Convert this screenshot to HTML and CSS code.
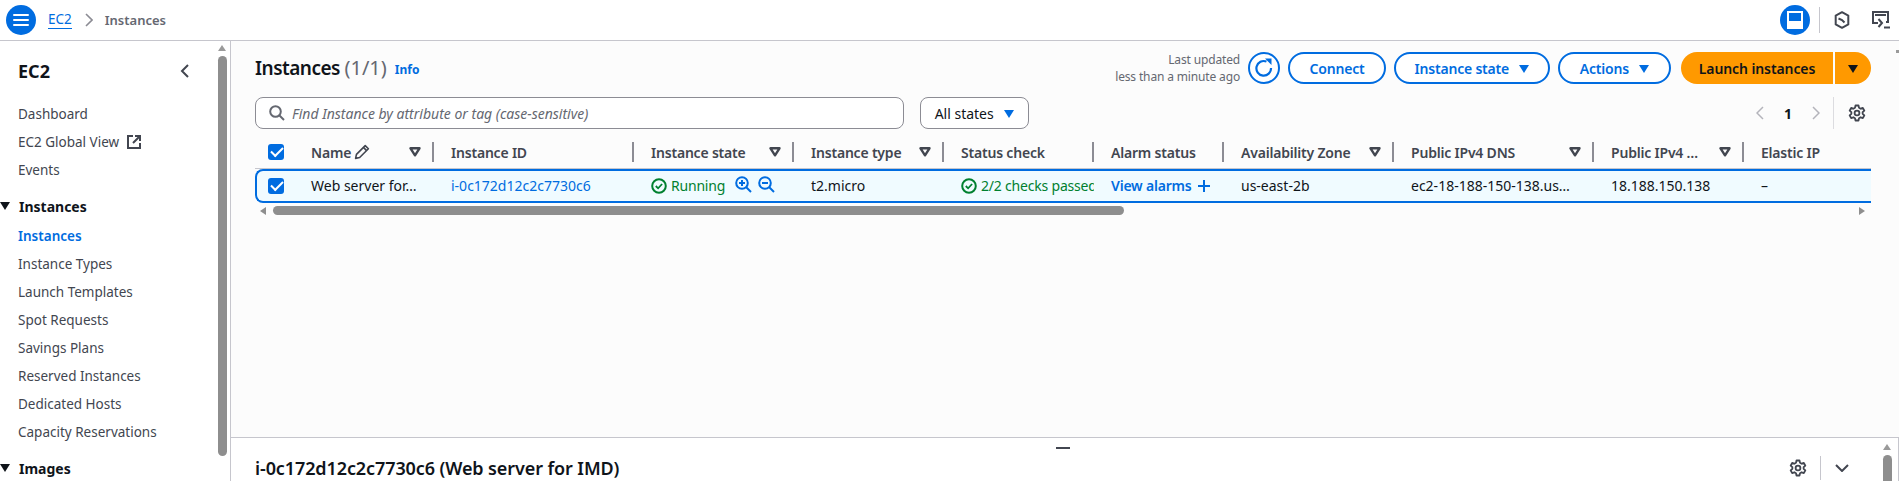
FILE: index.html
```html
<!DOCTYPE html>
<html lang="en">

<head>
    <meta charset="UTF-8">
    <title>Instances | EC2</title>
    <link rel="stylesheet" href="styles.css">
</head>

<body>
    <header class="topbar">
        <button class="menu-btn">
            <svg width="16" height="14" viewBox="0 0 16 14"><path d="M1 2h14M1 7h14M1 12h14" stroke="#fff" stroke-width="2" stroke-linecap="round"/></svg>
        </button>
        <a class="crumb-link">EC2</a>
        <svg class="crumb-sep" width="8" height="14" viewBox="0 0 8 14"><path d="M1 1l6 6-6 6" fill="none" stroke="#8c8c94" stroke-width="1.6"/></svg>
        <span class="crumb-current">Instances</span>
        <div class="topbar-right">
            <button class="panel-btn">
                <svg width="16" height="18" viewBox="0 0 16 18"><path d="M1 1h14v16H1z" fill="none" stroke="#fff" stroke-width="2"/><path d="M2 10h12v6H2z" fill="#fff"/></svg>
            </button>
            <span class="topbar-div"></span>
            <svg class="top-icon" width="16" height="18" viewBox="0 0 16 18"><path d="M8 1.200l6.300 3.400v8.800L8 16.800l-6.300-3.400V4.600z" fill="none" stroke="#424650" stroke-width="2" stroke-linejoin="round"/><path d="M4.500 7.500L8 9l2.500 2.500" fill="none" stroke="#424650" stroke-width="2"/></svg>
            <svg class="top-icon" width="18" height="18" viewBox="0 0 18 18"><path d="M6 12H1V1h15v10h-2" fill="none" stroke="#424650" stroke-width="2"/><path d="M3 3h11v2H3z" fill="#424650"/><path d="M6.500 8l3.500 4-3.500 4" fill="none" stroke="#424650" stroke-width="2"/><path d="M12 16.500h6" stroke="#424650" stroke-width="2"/></svg>
        </div>
    </header>

    <div class="layout">
        <aside class="sidebar">
            <div class="side-head">
                <h2>EC2</h2>
                <svg width="9" height="14" viewBox="0 0 9 14"><path d="M8 1L2 7l6 6" fill="none" stroke="#424650" stroke-width="2"/></svg>
            </div>
            <ul class="nav">
                <li>Dashboard</li>
                <li>EC2 Global View
                    <svg class="ext" width="14" height="14" viewBox="0 0 14 14"><path d="M6 1H1v12h12V8" fill="none" stroke="#424650" stroke-width="2"/><path d="M8 1h5v5M13 1L6 8" fill="none" stroke="#424650" stroke-width="2"/></svg>
                </li>
                <li>Events</li>
            </ul>
            <div class="nav-group"><i class="tri"></i>Instances</div>
            <ul class="nav">
                <li class="active">Instances</li>
                <li>Instance Types</li>
                <li>Launch Templates</li>
                <li>Spot Requests</li>
                <li>Savings Plans</li>
                <li>Reserved Instances</li>
                <li>Dedicated Hosts</li>
                <li>Capacity Reservations</li>
            </ul>
            <div class="nav-group"><i class="tri"></i>Images</div>
            <div class="side-scroll">
                <i class="arrow-up"></i>
                <div class="side-thumb"></div>
            </div>
        </aside>

        <main class="content">
            <section class="list-pane">
                <div class="page-head">
                    <h1>Instances <span class="count">(1/1)</span></h1>
                    <a class="info">Info</a>
                    <div class="actions">
                        <div class="updated">Last updated<br>less than a minute ago</div>
                        <button class="btn round">
                            <svg width="20" height="20" viewBox="0 0 20 20"><path d="M12.500 3.600A7.300 7.300 0 1 0 17 10" fill="none" stroke="#006ce0" stroke-width="2.200"/><path d="M11 .5h6.500V7z" fill="#006ce0"/></svg>
                        </button>
                        <button class="btn w-connect">Connect</button>
                        <button class="btn w-state">Instance state <i class="caret"></i></button>
                        <button class="btn w-actions">Actions <i class="caret"></i></button>
                        <div class="launch">
                            <button class="launch-main">Launch instances</button>
                            <button class="launch-drop"><i class="caret dark"></i></button>
                        </div>
                    </div>
                </div>

                <div class="filter-row">
                    <div class="search">
                        <svg width="16" height="16" viewBox="0 0 16 16"><circle cx="6.500" cy="6.500" r="5.300" fill="none" stroke="#656871" stroke-width="2"/><path d="M10.500 10.500L15 15" stroke="#656871" stroke-width="2"/></svg>
                        <span>Find Instance by attribute or tag (case-sensitive)</span>
                    </div>
                    <button class="states">All states <i class="caret"></i></button>
                    <div class="pager">
                        <svg width="8" height="14" viewBox="0 0 8 14"><path d="M7 1L1 7l6 6" fill="none" stroke="#b4b4bb" stroke-width="1.500"/></svg>
                        <b>1</b>
                        <svg width="8" height="14" viewBox="0 0 8 14"><path d="M1 1l6 6-6 6" fill="none" stroke="#b4b4bb" stroke-width="1.500"/></svg>
                        <span class="pager-div"></span>
                        <svg class="gear" width="18" height="18" viewBox="0 0 24 24"><use href="#gear"/></svg>
                    </div>
                </div>

                <div class="table-wrap">
                    <table class="grid">
                        <colgroup>
                            <col class="c-check"><col class="c-name"><col class="c-id"><col class="c-state"><col class="c-type"><col class="c-status"><col class="c-alarm"><col class="c-az"><col class="c-dns"><col class="c-ip"><col class="c-eip">
                        </colgroup>
                        <thead>
                            <tr>
                                <th class="check-cell"><i class="checkbox"></i></th>
                                <th><div class="th-in"><span class="pen">Name <svg width="16" height="16" viewBox="0 0 15 15"><path d="M1.500 13.500l.8-3.800L10.500 1.500l3 3-8.200 8.200z" fill="none" stroke="#424650" stroke-width="1.500" stroke-linejoin="round"/><path d="M8.800 3.200l3 3" stroke="#424650" stroke-width="1.500"/></svg></span><svg class="filter" width="12" height="10"><use href="#filter"/></svg></div></th>
                                <th><div class="th-in">Instance ID</div></th>
                                <th><div class="th-in">Instance state<svg class="filter" width="12" height="10"><use href="#filter"/></svg></div></th>
                                <th><div class="th-in">Instance type<svg class="filter" width="12" height="10"><use href="#filter"/></svg></div></th>
                                <th><div class="th-in">Status check</div></th>
                                <th><div class="th-in">Alarm status</div></th>
                                <th><div class="th-in">Availability Zone<svg class="filter" width="12" height="10"><use href="#filter"/></svg></div></th>
                                <th><div class="th-in">Public IPv4 DNS<svg class="filter" width="12" height="10"><use href="#filter"/></svg></div></th>
                                <th><div class="th-in">Public IPv4 …<svg class="filter" width="12" height="10"><use href="#filter"/></svg></div></th>
                                <th class="last"><div class="th-in">Elastic IP</div></th>
                            </tr>
                        </thead>
                        <tbody>
                            <tr class="selected">
                                <td class="check-cell"><i class="checkbox"></i></td>
                                <td>Web server for…</td>
                                <td><a class="link">i-0c172d12c2c7730c6</a></td>
                                <td>
                                    <span class="ok"><svg width="16" height="16" viewBox="0 0 16 16"><circle cx="8" cy="8" r="6.800" fill="none" stroke="#00802f" stroke-width="2"/><path d="M4.800 8l2.300 2.300 4-4.300" fill="none" stroke="#00802f" stroke-width="1.800"/></svg>Running</span>
                                    <svg class="zoom-icon" width="17" height="17" viewBox="0 0 17 17"><circle cx="7" cy="7" r="5.800" fill="none" stroke="#006ce0" stroke-width="2"/><path d="M11 11l5 5" stroke="#006ce0" stroke-width="2"/><path d="M4 7h6M7 4v6" stroke="#006ce0" stroke-width="2"/></svg>
                                    <svg class="zoom-icon second" width="17" height="17" viewBox="0 0 17 17"><circle cx="7" cy="7" r="5.800" fill="none" stroke="#006ce0" stroke-width="2"/><path d="M11 11l5 5" stroke="#006ce0" stroke-width="2"/><path d="M4 7h6" stroke="#006ce0" stroke-width="2"/></svg>
                                </td>
                                <td>t2.micro</td>
                                <td class="clip"><span class="ok"><svg width="16" height="16" viewBox="0 0 16 16"><circle cx="8" cy="8" r="6.800" fill="none" stroke="#00802f" stroke-width="2"/><path d="M4.800 8l2.300 2.300 4-4.300" fill="none" stroke="#00802f" stroke-width="1.800"/></svg>2/2 checks passed</span></td>
                                <td><a class="link strong">View alarms</a> <svg class="plus" width="14" height="14" viewBox="0 0 14 14"><path d="M1 7h12M7 1v12" stroke="#006ce0" stroke-width="2"/></svg></td>
                                <td>us-east-2b</td>
                                <td>ec2-18-188-150-138.us…</td>
                                <td>18.188.150.138</td>
                                <td class="last">–</td>
                            </tr>
                        </tbody>
                    </table>
                    <div class="h-scroll">
                        <i class="arrow-left"></i>
                        <div class="h-track"><div class="h-thumb"></div></div>
                        <i class="arrow-right"></i>
                    </div>
                </div>
            </section>

            <section class="detail-pane">
                <span class="grip"></span>
                <h2>i-0c172d12c2c7730c6 (Web server for IMD)</h2>
                <svg class="gear" width="18" height="18" viewBox="0 0 24 24"><use href="#gear"/></svg>
                <span class="detail-div"></span>
                <svg class="detail-chev" width="14" height="8" viewBox="0 0 14 8"><path d="M1 1l6 6 6-6" fill="none" stroke="#424650" stroke-width="2"/></svg>
                <div class="detail-scroll">
                    <i class="arrow-up"></i>
                    <div class="side-thumb"></div>
                </div>
            </section>
        </main>
    </div>

    <span class="page-mark"></span>

    <svg width="0" height="0" class="defs">
        <symbol id="gear" viewBox="0 0 24 24">
            <path d="M10 2h4l.7 3.100 2.100 1.200 3-1 2 3.500-2.300 2.100v2.200l2.300 2.100-2 3.500-3-1-2.100 1.200L14 22h-4l-.7-3.100-2.100-1.200-3 1-2-3.500 2.300-2.100v-2.200L2.200 8.800l2-3.500 3 1 2.100-1.200z" fill="none" stroke="#424650" stroke-width="2.400" stroke-linejoin="round"/>
            <circle cx="12" cy="12" r="3.200" fill="none" stroke="#424650" stroke-width="2.400"/>
        </symbol>
        <symbol id="filter" viewBox="0 0 12 10">
            <path d="M1.500 1.300h9L6 8.300z" fill="none" stroke="#424650" stroke-width="2.400" stroke-linejoin="round"/>
        </symbol>
    </svg>
</body>

</html>
```

FILE: styles.css
```css
* {
    margin: 0;
    padding: 0;
    box-sizing: border-box;
}

html,
body {
    height: 100%;
    overflow: hidden;
}

body {
    display: flex;
    flex-direction: column;
    background: #ffffff;
    color: #0f141a;
    font-family: "Noto Sans", "Liberation Sans", sans-serif;
    font-size: 14px;
}

i {
    display: inline-block;
    font-style: normal;
}

button {
    font-family: inherit;
    background: none;
    border: 0;
}

.defs {
    position: absolute;
}

.page-mark {
    position: absolute;
    right: 0;
    top: 50px;
    width: 3px;
    height: 3px;
    background: #9a9a9a;
}

/* top bar */
.topbar {
    flex: 0 0 41px;
    display: flex;
    align-items: center;
    padding: 0 0 1px 6px;
    border-bottom: 1px solid #c6c6cd;
}

.menu-btn,
.panel-btn {
    width: 30px;
    height: 30px;
    border-radius: 50%;
    background: #006ce0;
    display: flex;
    align-items: center;
    justify-content: center;
}

.crumb-link {
    margin-left: 12px;
    color: #006ce0;
    border-bottom: 1px solid #006ce0;
    font-size: 13.5px;
    line-height: 18px;
}

.crumb-sep {
    margin: 0 12px 0 13px;
}

.crumb-current {
    color: #656871;
    font-size: 13px;
    font-weight: 600;
}

.topbar-right {
    margin-left: auto;
    display: flex;
    align-items: center;
    padding-right: 9px;
}

.topbar-div {
    width: 1px;
    height: 26px;
    background: #c6c6cd;
    margin: 0 14px 0 9px;
}

.top-icon {
    margin-right: 22px;
}

.top-icon:last-child {
    margin-right: 0;
}

/* side nav */
.layout {
    flex: 1;
    display: flex;
    min-height: 0;
}

.sidebar {
    position: relative;
    flex: 0 0 231px;
    border-right: 1px solid #c6c6cd;
    overflow: hidden;
}

.side-head {
    display: flex;
    align-items: center;
    justify-content: space-between;
    width: 171px;
    height: 40px;
    margin: 10px 0 9px 18px;
}

.side-head h2 {
    font-size: 18px;
    font-weight: 700;
}

.nav {
    list-style: none;
}

.nav li {
    padding-left: 18px;
    font-size: 13.5px;
    line-height: 28px;
    color: #424650;
    white-space: nowrap;
}

.nav li.active {
    color: #006ce0;
    font-weight: 600;
}

.ext {
    margin-left: 4px;
    vertical-align: -2px;
}

.nav-group {
    display: flex;
    align-items: center;
    height: 28px;
    margin: 8px 0 2px;
    font-weight: 700;
}

.tri {
    width: 0;
    height: 0;
    margin-right: 9px;
    border-left: 5px solid transparent;
    border-right: 5px solid transparent;
    border-top: 8px solid #0f141a;
}

.side-scroll {
    position: absolute;
    left: 218px;
    top: 4px;
    bottom: 0;
    width: 9px;
}

.side-thumb {
    width: 9px;
    height: 400px;
    margin-top: 5px;
    border-radius: 5px;
    background: #8e8e8e;
}

.arrow-up {
    display: block;
    width: 0;
    height: 0;
    border-left: 4.5px solid transparent;
    border-right: 4.5px solid transparent;
    border-bottom: 6px solid #9a9a9a;
}

/* instance list */
.content {
    flex: 1;
    display: flex;
    flex-direction: column;
    min-width: 0;
}

.list-pane {
    flex: 0 0 397px;
    padding: 11px 28px 0 24px;
    background: #fcfcfc;
    border-bottom: 1px solid #c6c6cd;
}

.page-head {
    display: flex;
    align-items: center;
    height: 32px;
}

.page-head h1 {
    margin-top: -2px;
    font-size: 19px;
    font-weight: 600;
    letter-spacing: -0.5px;
}

.count {
    color: #656871;
    font-size: 20px;
    font-weight: 400;
    letter-spacing: 0;
}

.info {
    margin: 3px 0 0 8px;
    font-size: 12px;
    font-weight: 700;
    color: #006ce0;
}

.actions {
    margin-left: auto;
    display: flex;
    align-items: center;
    gap: 8px;
}

.updated {
    font-size: 12px;
    line-height: 17px;
    color: #656871;
    text-align: right;
    letter-spacing: -0.15px;
}

.btn {
    height: 32px;
    border: 2px solid #006ce0;
    border-radius: 16px;
    color: #006ce0;
    font-size: 14px;
    font-weight: 600;
    letter-spacing: -0.2px;
    background: #ffffff;
    white-space: nowrap;
}

.btn.round {
    width: 32px;
    border-radius: 50%;
    display: flex;
    align-items: center;
    justify-content: center;
}

.w-connect {
    width: 98px;
}

.w-state {
    width: 156px;
}

.w-actions {
    width: 113px;
}

.caret {
    width: 0;
    height: 0;
    margin-left: 7px;
    vertical-align: 1px;
    border-left: 5.5px solid transparent;
    border-right: 5.5px solid transparent;
    border-top: 8px solid #006ce0;
}

.caret.dark {
    margin-left: 0;
    border-top-color: #0f141a;
}

.launch {
    display: flex;
    gap: 2px;
    margin-left: 2px;
}

.launch-main,
.launch-drop {
    height: 32px;
    background: #ff9900;
    color: #0f141a;
    font-size: 14px;
    font-weight: 600;
    letter-spacing: -0.1px;
}

.launch-main {
    width: 152px;
    border-radius: 16px 0 0 16px;
}

.launch-drop {
    width: 36px;
    border-radius: 0 16px 16px 0;
}

.filter-row {
    display: flex;
    align-items: center;
    margin-top: 13px;
    height: 32px;
}

.search {
    display: flex;
    align-items: center;
    gap: 7px;
    width: 649px;
    height: 32px;
    padding-left: 13px;
    background: #ffffff;
    border: 1px solid #8c8c94;
    border-radius: 8px;
    font-style: italic;
    font-size: 14px;
    color: #656871;
}

.states {
    display: block;
    width: 109px;
    height: 32px;
    margin-left: 16px;
    background: #ffffff;
    border: 1px solid #8c8c94;
    border-radius: 8px;
    font-size: 14px;
    color: #0f141a;
}

.pager {
    margin-left: auto;
    display: flex;
    align-items: center;
    gap: 20px;
    padding-right: 5px;
}

.pager b {
    font-weight: 700;
}

.pager-div {
    width: 1px;
    height: 32px;
    background: #dcdce0;
    margin: 0 -6px 0 -7px;
}

/* table */
.table-wrap {
    margin-top: 12px;
    width: 1616px;
}

.grid {
    width: 1616px;
    table-layout: fixed;
    border-collapse: separate;
    border-spacing: 0;
}

.c-check { width: 39px; }
.c-name { width: 140px; }
.c-id { width: 200px; }
.c-state { width: 160px; }
.c-type { width: 150px; }
.c-status { width: 150px; }
.c-alarm { width: 130px; }
.c-az { width: 170px; }
.c-dns { width: 200px; }
.c-ip { width: 150px; }
.c-eip { width: 127px; }

.grid th {
    height: 28px;
    padding: 0 8px 5px 0;
    border-bottom: 1px solid #c6c6cd;
    font-weight: 600;
    font-size: 14px;
    letter-spacing: -0.2px;
    text-align: left;
    color: #424650;
    white-space: nowrap;
}

.th-in {
    display: flex;
    align-items: center;
    justify-content: space-between;
    height: 20px;
    padding: 0 11px 0 17px;
    border-right: 2px solid #8c8c94;
    margin-right: -8px;
}

.grid th.last .th-in {
    border-right: 0;
}

.pen {
    display: flex;
    align-items: center;
    gap: 3px;
}

.check-cell {
    padding: 0 0 5px 13px !important;
    line-height: 0;
}

.checkbox {
    position: relative;
    width: 16px;
    height: 16px;
    border-radius: 3px;
    background: #006ce0;
}

.checkbox::after {
    content: "";
    position: absolute;
    left: 3px;
    top: 3px;
    width: 10px;
    height: 5px;
    border-left: 2px solid #fff;
    border-bottom: 2px solid #fff;
    transform: rotate(-45deg);
}

.grid td {
    height: 34px;
    padding: 0 0 1px 17px;
    background: #f0fbff;
    border-top: 2px solid #006ce0;
    border-bottom: 2px solid #006ce0;
    white-space: nowrap;
    overflow: hidden;
}

.grid td.check-cell {
    border-left: 2px solid #006ce0;
    border-radius: 8px 0 0 8px;
    padding: 0 0 1px 11px !important;
}

.link {
    color: #006ce0;
}

.link.strong {
    font-weight: 600;
    letter-spacing: -0.2px;
}

.ok {
    color: #00802f;
    letter-spacing: -0.2px;
}

.ok svg {
    margin-right: 4px;
    vertical-align: -3px;
}

.zoom-icon {
    margin-left: 6px;
    vertical-align: -2px;
}

.zoom-icon.second {
    margin-left: 3px;
}

.plus {
    margin-left: 2px;
    vertical-align: -2px;
}

.h-scroll {
    display: flex;
    align-items: center;
    height: 9px;
    margin-top: 3px;
    padding: 0 6px 0 5px;
}

.h-track {
    flex: 1;
    margin: 0 7px 0 7px;
}

.h-thumb {
    width: 851px;
    height: 9px;
    border-radius: 5px;
    background: #8e8e8e;
}

.arrow-left {
    width: 0;
    height: 0;
    border-top: 4.5px solid transparent;
    border-bottom: 4.5px solid transparent;
    border-right: 6px solid #8e8e8e;
}

.arrow-right {
    width: 0;
    height: 0;
    border-top: 4.5px solid transparent;
    border-bottom: 4.5px solid transparent;
    border-left: 6px solid #8e8e8e;
}

/* split panel */
.detail-pane {
    position: relative;
    flex: 1;
    display: flex;
    align-items: center;
    padding: 17px 0 0 24px;
    min-height: 0;
    overflow: hidden;
    border-right: 1px solid #c6c6cd;
}

.detail-pane h2 {
    flex: 1;
    font-size: 18px;
    font-weight: 600;
    letter-spacing: -0.1px;
    white-space: nowrap;
}

.grip {
    position: absolute;
    left: 825px;
    top: 9px;
    width: 14px;
    height: 2px;
    background: #424650;
}

.detail-div {
    width: 1px;
    height: 24px;
    background: #c6c6cd;
    margin: 0 14px 0 13px;
}

.detail-chev {
    margin-right: 49px;
}

.detail-scroll {
    position: absolute;
    right: 6px;
    top: 6px;
    width: 9px;
}
```
